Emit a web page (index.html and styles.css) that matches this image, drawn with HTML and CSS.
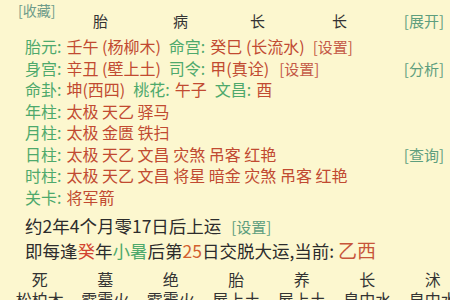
FILE: index.html
```html
<!DOCTYPE html>
<html>
<head>
<meta charset="utf-8">
<link rel="stylesheet" href="styles.css">
</head>
<body>
<div class="page">
  <div class="fav">[收藏]</div>
  <div class="head">
    <span class="hc c1">胎</span>
    <span class="hc c2">病</span>
    <span class="hc c3">长</span>
    <span class="hc c4">长</span>
    <span class="act">[展开]</span>
  </div>
  <div class="rows">
    <div class="row"><span class="lb">胎元:</span><span class="v">壬午 (杨柳木)</span><span class="lb">命宫:</span><span class="v">癸巳 (长流水)</span><span class="set">[设置]</span></div>
    <div class="row"><span class="lb">身宫:</span><span class="v">辛丑 (壁上土)</span><span class="lb">司令:</span><span class="v">甲(真诠)</span><span class="set sp">[设置]</span><span class="act">[分析]</span></div>
    <div class="row"><span class="lb">命卦:</span><span class="v">坤(西四)</span><span class="lb">桃花:</span><span class="v">午子</span><span class="lb">文昌:</span><span class="v">酉</span></div>
    <div class="row"><span class="lb">年柱:</span><span class="v">太极 天乙 驿马</span></div>
    <div class="row"><span class="lb">月柱:</span><span class="v">太极 金匮 铁扫</span></div>
    <div class="row"><span class="lb">日柱:</span><span class="v">太极 天乙 文昌 灾煞 吊客 红艳</span><span class="act">[查询]</span></div>
    <div class="row"><span class="lb">时柱:</span><span class="v">太极 天乙 文昌 将星 暗金 灾煞 吊客 红艳</span></div>
    <div class="row"><span class="lb">关卡:</span><span class="v">将军箭</span></div>
  </div>
  <div class="big first">约2年4个月零17日后上运 <span class="set2">[设置]</span></div>
  <div class="big">即每逢<span class="r">癸</span>年<span class="g">小暑</span>后第<span class="o">25</span>日交脱大运,当前: <span class="cur">乙西</span></div>
  <div class="grid top">
    <span>死</span><span>墓</span><span>绝</span><span>胎</span><span>养</span><span>长</span><span>沭</span>
  </div>
  <div class="grid">
    <span>松柏木</span><span>霹雳火</span><span>霹雳火</span><span>屋上土</span><span>屋上土</span><span>泉中水</span><span>泉中水</span>
  </div>
</div>
</body>
</html>
```

FILE: styles.css
```css
html, body {
  margin: 0;
  padding: 0;
  background: #fcf7cf;
  overflow: hidden;
}
body {
  width: 450px;
  height: 300px;
  font-family: "Noto Sans CJK SC", "Noto Sans", sans-serif;
  color: #333;
}
.page {
  display: flex;
  flex-direction: column;
}
.fav {
  font-size: 14px;
  color: #6f9c8a;
  padding-left: 18px;
  line-height: 20px;
  height: 20px;
}
.head {
  display: flex;
  align-items: center;
  font-size: 15px;
  line-height: 22px;
  height: 22px;
  margin-top: -10px;
  position: relative;
}
.hc {
  position: absolute;
  top: 0;
}
.c1 { left: 93px; }
.c2 { left: 173px; }
.c3 { left: 250px; }
.c4 { left: 332px; }
.act {
  margin-left: auto;
  margin-right: 6px;
  font-size: 15px;
  color: #5e9e7e;
}
.rows {
  margin-top: 4px;
  display: flex;
  flex-direction: column;
}
.row {
  display: flex;
  align-items: center;
  font-size: 16px;
  height: 21.5px;
  line-height: 21.5px;
  padding-left: 25px;
  white-space: nowrap;
}
.lb {
  color: #4ea96c;
  margin-right: 5px;
}
.v {
  color: #c14a31;
  margin-right: 8px;
}
.set {
  color: #c45a47;
  font-size: 15px;
}
.set.sp { margin-left: 2px; }
.big {
  font-size: 17.5px;
  height: 24px;
  line-height: 24px;
  padding-left: 25px;
  white-space: nowrap;
  color: #2c2c2c;
}
.big.first { margin-top: 6px; }
.set2 {
  font-size: 15px;
  color: #5e9e7e;
  margin-left: 6px;
}
.r { color: #d2432f; }
.g { color: #4ea96c; }
.o { color: #d2602f; }
.cur {
  color: #c7553a;
  font-size: 19px;
}
.grid {
  display: grid;
  grid-template-columns: repeat(7, 65.5px);
  padding-left: 7px;
  font-size: 16px;
  line-height: 20px;
  height: 20px;
  white-space: nowrap;
}
.grid.top { margin-top: 7px; }
.grid span { text-align: center; }
```
